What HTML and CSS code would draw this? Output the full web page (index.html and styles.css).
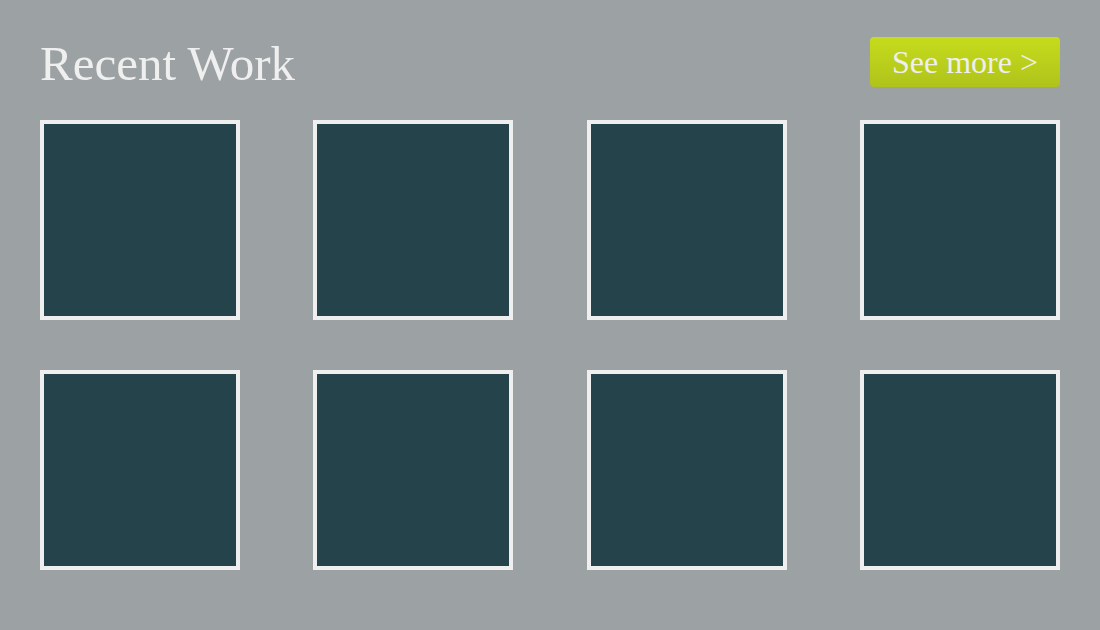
FILE: index.html
```html
<!DOCTYPE html>
<html lang="en">
<head>
<meta charset="utf-8">
<meta name="viewport" content="width=device-width, initial-scale=1">
<title>Recent Work</title>
<link rel="stylesheet" href="styles.css">
</head>
<body>
<main class="work">
  <header class="work-header">
    <h1 class="work-title">Recent Work</h1>
    <a class="more" href="#">See more &gt;</a>
  </header>
  <ul class="gallery">
    <li class="tile"></li>
    <li class="tile"></li>
    <li class="tile"></li>
    <li class="tile"></li>
    <li class="tile"></li>
    <li class="tile"></li>
    <li class="tile"></li>
    <li class="tile"></li>
  </ul>
</main>
</body>
</html>
```

FILE: styles.css
```css
* {
  box-sizing: border-box;
}

body {
  margin: 0;
  background: #9ca1a3;
  color: #efefef;
  font-family: "Liberation Serif", serif;
}

.work {
  padding: 37px 40px 60px;
}

.work-header {
  display: flex;
  justify-content: space-between;
  align-items: flex-start;
  margin-bottom: 29px;
}

.work-title {
  margin: 0;
  font-size: 49px;
  font-weight: 400;
  line-height: 54px;
}

.more {
  padding: 0 22px;
  border-radius: 4px;
  background: linear-gradient(#c5dc1c, #afc31b);
  color: inherit;
  font-size: 32px;
  line-height: 50px;
  text-decoration: none;
}

.gallery {
  display: grid;
  grid-template-columns: repeat(auto-fill, 200px);
  justify-content: space-between;
  gap: 50px;
  margin: 0;
  padding: 0;
  list-style: none;
}

.tile {
  height: 200px;
  border: 4px solid #efefef;
  background: #25434b;
}
```
